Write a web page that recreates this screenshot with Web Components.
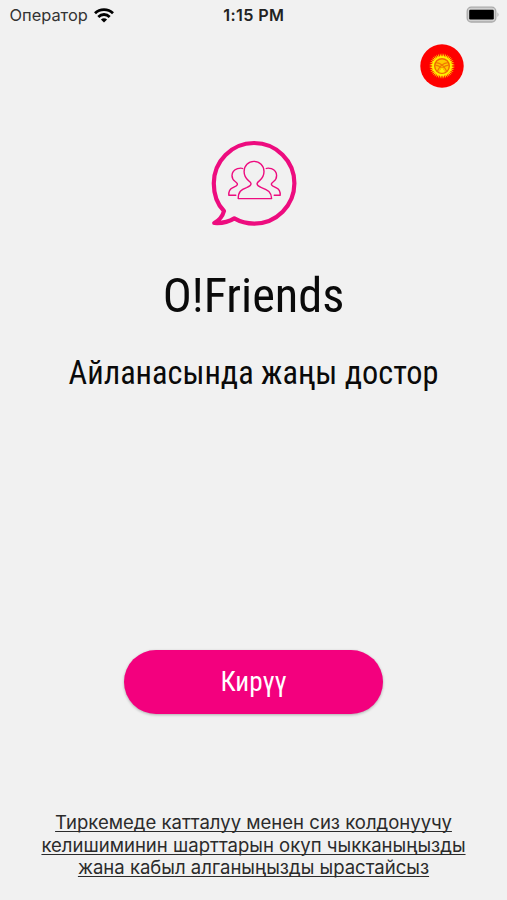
<!DOCTYPE html>
<html lang="ky">
<head>
<meta charset="utf-8">
<meta name="viewport" content="width=device-width, initial-scale=1">
<title>O!Friends</title>
<style>
body {
  margin: 0;
  background: #f1f1f1;
}
</style>
</head>
<body>
<of-welcome-page></of-welcome-page>

<script>
class StatusBar extends HTMLElement {
  constructor() {
    super();
    this.attachShadow({ mode: 'open' }).innerHTML = `
      <style>
        :host {
          display: grid;
          grid-template-columns: 1fr auto 1fr;
          height: 30px;
          padding: 0 7px 0 9.5px;
          box-sizing: border-box;
          align-items: center;
          font: 16.4px/20px Inter, "Liberation Sans", sans-serif;
          color: #333;
        }
        .carrier { display: flex; align-items: center; gap: 6px; }
        .time { font-weight: 600; font-size: 16.2px; letter-spacing: 0.35px; color: #222; margin-left: -2px; }
        .battery { justify-self: end; }
        svg { display: block; }
      </style>
      <div class="carrier">
        <slot name="carrier"></slot>
        <svg width="20" height="15" viewBox="0 0 20 15">
          <g fill="none" stroke="#000" stroke-width="2.8">
            <path d="M1 5.3C6 .5 14 .5 19 5.3"/>
            <path d="M4.3 8.9C7.6 5.7 12.4 5.7 15.7 8.9"/>
          </g>
          <path d="M6.9 11.5C8.8 9.8 11.2 9.8 13.1 11.5L10 14.4Z"/>
        </svg>
      </div>
      <div class="time"><slot name="time"></slot></div>
      <svg class="battery" width="34" height="18" viewBox="0 0 34 18">
        <rect x="1.2" y="1.2" width="28.6" height="14.8" rx="4" fill="#d0d0d0" stroke="#aaa" stroke-width="1.3"/>
        <rect x="3.2" y="3.7" width="24.6" height="9.8" rx="1.2"/>
        <path d="M31.5 6.2Q33.5 8.6 31.5 11Z" fill="#aaa"/>
      </svg>
    `;
  }
}

class FlagButton extends HTMLElement {
  constructor() {
    super();
    // the sun has 40 rays
    let rays = '';
    for (let i = 0; i < 40; i++) {
      rays += `<path d="M-.8-9 0-13 .8-9Z" transform="rotate(${i * 9})"/>`;
    }
    this.attachShadow({ mode: 'open' }).innerHTML = `
      <style>
        :host { display: block; width: 44px; height: 44px; }
        svg { display: block; }
      </style>
      <svg width="44" height="44" viewBox="-22 -22 44 44">
        <circle r="21.7" fill="#fe0000"/>
        <g fill="#fff000">${rays}<circle r="9.8"/></g>
        <circle r="7.3" fill="#ffc800" stroke="#f06a00" stroke-width="1.4"/>
        <g fill="none" stroke="#f07a00" stroke-width="1.2">
          <path d="M-6-3.4Q1-3 4.8 5.4M-6.8-.8Q0 0 2.5 6.4"/>
          <path d="M6-3.4Q-1-3-4.8 5.4M6.8-.8Q0 0-2.5 6.4"/>
        </g>
        <path d="M0 1.2 3 6Q0 7.4-3 6Z" fill="#fff000"/>
      </svg>
    `;
  }
}

class FriendsLogo extends HTMLElement {
  constructor() {
    super();
    this.attachShadow({ mode: 'open' }).innerHTML = `
      <style>
        :host { display: block; width: 100px; height: 100px; }
        svg { display: block; }
      </style>
      <svg width="100" height="100" viewBox="0 0 100 100" fill="none" stroke="#ed0c7f" stroke-linejoin="round" stroke-linecap="round">
        <path stroke-width="4.2" d="M20 77C12.5 69.5 9.8 60 9.8 49.5A40.3 40.3 0 1 1 50.2 89.6C43 89.6 36.5 88 30.3 84.4C24.5 88 17.5 89.5 10.2 89C15 86.5 18.5 82.5 20 77Z"/>
        <g stroke-width="1.4">
          <path d="M34.2 64.6C34.3 57.5 37 55.6 42.6 53.6C46 52.3 47.3 51.3 47 49.5C46.8 48.4 45.8 47.7 44.5 46.6C41.4 44 40.1 41 40.1 37.5C40.1 31.5 44.4 27.4 50 27.4S60 31.5 60 37.5C60 41 58.6 44 55.6 46.6C54.2 47.7 53.3 48.4 53.1 49.5C52.8 51.3 54 52.3 57.5 53.6C64 56 67.4 58 67.6 64.6Z"/>
          <path d="M38.7 34.5C37.2 33.7 35.6 34 33.5 34.7C29.8 36.1 28 38.5 28 41.6C28 44.2 29.1 46.1 31.2 47.5C33 48.7 33.9 49.8 33.2 51C32.5 52.3 30.4 52.9 28.4 53.9C25.6 55.3 24.6 57.7 24.8 61.2H31.8"/>
          <path d="M62.2 34.5C63.7 33.7 65.3 34 67.4 34.7C71.1 36.1 72.6 38.5 72.6 41.6C72.6 44.2 71.7 46.1 69.6 47.5C67.8 48.7 66.9 49.8 67.6 51C68.3 52.3 70.4 52.9 72.4 53.9C75.2 55.3 76.4 57.7 76.2 61.2H70.2"/>
        </g>
      </svg>
    `;
  }
}

class PrimaryButton extends HTMLElement {
  constructor() {
    super();
    this.attachShadow({ mode: 'open' }).innerHTML = `
      <style>
        :host { display: block; width: 259px; }
        button {
          display: block;
          width: 100%;
          height: 64px;
          padding: 0;
          border: 0;
          border-radius: 32px;
          background: #f3007e;
          box-shadow: 0 1px 3px rgba(0, 0, 0, 0.28);
          color: #fff;
          font: 27.2px/64px "Roboto Condensed", Roboto, sans-serif;
          cursor: pointer;
        }
      </style>
      <button type="button"><slot></slot></button>
    `;
  }
}

class LegalLink extends HTMLElement {
  constructor() {
    super();
    this.attachShadow({ mode: 'open' }).innerHTML = `
      <style>
        :host {
          display: block;
          text-align: center;
          font: 18.55px/22.7px Inter, "Liberation Sans", sans-serif;
        }
        a {
          color: #2b2b2b;
          text-decoration: underline;
          text-decoration-thickness: 1px;
          text-decoration-skip-ink: none;
          text-underline-offset: 2px;
        }
      </style>
      <a href="#terms"><slot></slot></a>
    `;
  }
}

class WelcomePage extends HTMLElement {
  constructor() {
    super();
    this.attachShadow({ mode: 'open' }).innerHTML = `
      <style>
        :host {
          display: flex;
          flex-direction: column;
          align-items: center;
          height: 900px;
          box-sizing: border-box;
          padding-bottom: 21px;
          color: #0a0a0a;
          font-family: "Roboto Condensed", Roboto, sans-serif;
        }
        of-status-bar { align-self: stretch; }
        of-flag { align-self: flex-end; margin: 13.5px 43px 0 0; }
        of-logo { margin-top: 46.5px; }
        h1 { margin: 34px 0 0; font-size: 48.4px; line-height: 56px; font-weight: 400; }
        p { margin: 30px 0 0; font-size: 32.3px; line-height: 38px; }
        of-button { margin-top: auto; }
        of-legal { margin-top: 96.5px; }
      </style>
      <of-status-bar>
        <span slot="carrier">Оператор</span>
        <span slot="time">1:15 PM</span>
      </of-status-bar>
      <of-flag></of-flag>
      <of-logo></of-logo>
      <h1>O!Friends</h1>
      <p>Айланасында жаңы достор</p>
      <of-button>Кирүү</of-button>
      <of-legal>Тиркемеде катталуу менен сиз колдонуучу<br>келишиминин шарттарын окуп чыкканыңызды<br>жана кабыл алганыңызды ырастайсыз</of-legal>
    `;
  }
}

customElements.define('of-status-bar', StatusBar);
customElements.define('of-flag', FlagButton);
customElements.define('of-logo', FriendsLogo);
customElements.define('of-button', PrimaryButton);
customElements.define('of-legal', LegalLink);
customElements.define('of-welcome-page', WelcomePage);
</script>
</body>
</html>
